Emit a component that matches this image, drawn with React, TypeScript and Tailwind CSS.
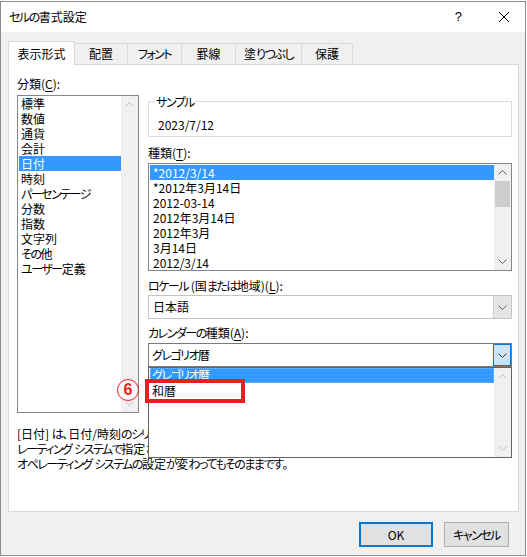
import React from 'react'

// セルの書式設定 dialog — 表示形式 tab with the calendar dropdown open

const categories = ['標準', '数値', '通貨', '会計', '日付', '時刻', 'パーセンテージ', '分数', '指数', '文字列', 'その他', 'ユーザー定義']
const formats = ['*2012/3/14', '*2012年3月14日', '2012-03-14', '2012年3月14日', '2012年3月', '3月14日', '2012/3/14']
const tabs = [
  { label: '表示形式', w: 'w-[67px]' },
  { label: '配置', w: 'w-[53px]' },
  { label: 'フォント', w: 'w-[54px]' },
  { label: '罫線', w: 'w-[54px]' },
  { label: '塗りつぶし', w: 'w-[66px]' },
  { label: '保護', w: 'w-[51px]' },
]

// the UI font has narrow kana; tighten kana runs so widths line up
function J({ children }: { children: string }) {
  const parts = children.split(/([\u3041-\u30ff]+)/)
  return (
    <>
      {parts.map((p, i) =>
        i % 2 ? (
          <span key={i} className="tracking-[-1.5px]">
            {p}
          </span>
        ) : (
          p
        ),
      )}
    </>
  )
}

function Chevron({ up, color }: { up?: boolean; color: string }) {
  return (
    <svg width="9" height="5" viewBox="0 0 9 5">
      <polyline
        points={up ? '0.5,4.5 4.5,0.5 8.5,4.5' : '0.5,0.5 4.5,4.5 8.5,0.5'}
        fill="none"
        stroke={color}
        strokeWidth="1"
      />
    </svg>
  )
}

function ScrollBar({ enabled, thumb }: { enabled?: boolean; thumb?: boolean }) {
  const c = enabled ? '#606060' : '#c0c0c0'
  return (
    <div className="w-[17px] h-full bg-[#f0f0f0] flex flex-col">
      <div className="h-[17px] flex items-center justify-center">
        <Chevron up color={c} />
      </div>
      <div className="flex-1 px-[1px]">
        {thumb && <div className="h-[26px] bg-[#cdcdcd]" />}
      </div>
      <div className="h-[17px] flex items-center justify-center">
        <Chevron color={c} />
      </div>
    </div>
  )
}

function Label({ text, k, className = '' }: { text: string; k: string; className?: string }) {
  // text like "分類(C):" with the access key underlined
  const [before, after] = text.split(`(${k})`)
  return (
    <div className={`h-[15px] leading-[15px] whitespace-nowrap ${className}`}>
      <J>{before}</J>(<span className="underline underline-offset-2">{k}</span>){after}
    </div>
  )
}

export default function App() {
  return (
    <div className="w-[527px] h-[557px] bg-white font-['Noto_Sans_CJK_JP','Noto_Sans',sans-serif] [font-feature-settings:'palt'] text-[12px] text-black">
      <div className="h-px bg-white" />
      <div className="w-[526px] h-[555px] border border-[#8c8c8c] bg-[#f0f0f0] flex flex-col">
        {/* title bar */}
        <div className="h-[30px] bg-white flex items-center pl-[8px] shrink-0">
          <span className="text-[12px]">
            <J>セルの書式設定</J>
          </span>
          <span className="ml-auto mr-[36px] text-[13px] font-['Liberation_Sans',sans-serif]">?</span>
          <svg width="12" height="12" viewBox="0 0 12 12" className="mr-[15px]">
            <path d="M1 1 L11 11 M11 1 L1 11" stroke="#000" strokeWidth="1" />
          </svg>
        </div>

        <div className="pt-[9px] px-[7px] flex flex-col">
          {/* tabs */}
          <div className="h-[24px] flex items-end -mb-px relative z-10">
            {tabs.map((t, i) =>
              i === 0 ? (
                <div
                  key={t.label}
                  className={`${t.w} h-[24px] bg-white border border-b-0 border-[#d9d9d9] flex items-center justify-center text-[12px]`}
                >
                  <J>{t.label}</J>
                </div>
              ) : (
                <div
                  key={t.label}
                  className={`${t.w} h-[22px] bg-[#f0f0f0] border border-l-0 border-[#d9d9d9] flex items-center justify-center text-[12px]`}
                >
                  <J>{t.label}</J>
                </div>
              ),
            )}
          </div>

          {/* panel */}
          <div className="w-[511px] h-[448px] border border-[#d9d9d9] bg-white pl-[8px] pt-[11px] relative">
            <div className="flex gap-[9px]">
              {/* category list */}
              <div className="w-[122px] flex flex-col">
                <Label text="分類(C):" k="C" />
                <div className="mt-[4px] h-[318px] border border-[#828790] bg-white flex">
                  <div className="flex-1 pl-[1px]">
                    {categories.map((c) => (
                      <div
                        key={c}
                        className={`h-[15px] leading-[15px] pl-[2px] whitespace-nowrap ${c === '日付' ? 'bg-[#3399ff] text-white' : ''}`}
                      >
                        <J>{c}</J>
                      </div>
                    ))}
                  </div>
                  <ScrollBar />
                </div>
              </div>

              {/* right column */}
              <div className="w-[364px] flex flex-col">
                <div className="mt-[25px] h-[36px] border border-[#dcdcdc] relative pt-[15px] pl-[9px]">
                  <span className="absolute -top-[8px] left-[6px] bg-white px-[1px] leading-[15px]">
                    <J>サンプル</J>
                  </span>
                  <div className="leading-[15px]">2023/7/12</div>
                </div>

                <Label text="種類(T):" k="T" className="mt-[8px]" />
                <div className="mt-[3px] h-[108px] border border-[#828790] bg-white flex">
                  <div className="flex-1 pl-[1px] pt-[1px]">
                    {formats.map((f, i) => (
                      <div
                        key={f}
                        className={`h-[15px] leading-[15px] pl-[3px] whitespace-nowrap ${i === 0 ? 'bg-[#3399ff] text-white' : ''}`}
                      >
                        {f}
                      </div>
                    ))}
                  </div>
                  <ScrollBar enabled thumb />
                </div>

                <Label text="ロケール (国または地域)(L):" k="L" className="mt-[7px]" />
                <div className="mt-[2px] h-[24px] border border-[#c4c4c4] bg-white flex items-stretch">
                  <div className="flex-1 pl-[4px] flex items-center">日本語</div>
                  <div className="w-[18px] bg-[#e5e5e5] border-l border-[#d0d0d0] flex items-center justify-center">
                    <Chevron color="#606060" />
                  </div>
                </div>

                <Label text="カレンダーの種類(A):" k="A" className="mt-[6px]" />
                <div className="mt-[3px] h-[24px] relative">
                  <div className="h-full border border-[#7a7a7a] bg-white flex items-stretch">
                    <div className="flex-1 pl-[3px] flex items-center">
                      <J>グレゴリオ暦</J>
                    </div>
                    <div className="w-[18px] bg-[#cce4f7] border border-[#0078d7] flex items-center justify-center">
                      <Chevron color="#404040" />
                    </div>
                  </div>

                  {/* open dropdown */}
                  <div className="absolute left-0 top-[24px] w-[364px] h-[91px] border border-[#646464] bg-white flex z-20">
                    <div className="flex-1 pl-[1px]">
                      <div className="h-[15px] leading-[14px] pl-[2px] bg-[#3399ff] text-white outline-1 outline-dotted outline-[#7fbfff] -outline-offset-1">
                        <J>グレゴリオ暦</J>
                      </div>
                      <div className="h-[15px] leading-[15px] pl-[2px]">和暦</div>
                    </div>
                    <ScrollBar />
                  </div>
                </div>
              </div>
            </div>

            {/* description */}
            <div className="mt-[13px] leading-[15px] whitespace-nowrap">
              <div>
                <J>[日付] は、日付/時刻のシリアル値を日付形式で表示します。アスタリスク (*) で始まる日付形式は、</J>
              </div>
              <div>
                <J>レーティング システムで指定された地域の日付/時刻の設定に応じて変わります。アスタリスクのない</J>
              </div>
              <div>
                <J>オペレーティング システムの設定が変わってもそのままです。</J>
              </div>
            </div>

            {/* annotation */}
            <div className="absolute left-[136px] top-[314px] w-[100px] h-[24px] border-[4px] border-[#ed1c24] z-30" />
            <div className="absolute left-[108px] top-[314px] w-[22px] h-[22px] rounded-full border-[1.5px] border-[#ed1c24] bg-white/70 flex items-center justify-center text-[#ed1c24] font-bold text-[16px] leading-none font-['Liberation_Sans',sans-serif] z-30">
              6
            </div>
          </div>

          {/* buttons */}
          <div className="mt-[10px] flex justify-end gap-[11px] pr-[9px]">
            <button className="w-[74px] h-[25px] bg-[#e1e1e1] border-2 border-[#0078d7] text-[12px]">OK</button>
            <button className="w-[65px] h-[25px] bg-[#e1e1e1] border border-[#adadad] text-[12px]">
              <J>キャンセル</J>
            </button>
          </div>
        </div>
      </div>
    </div>
  )
}
